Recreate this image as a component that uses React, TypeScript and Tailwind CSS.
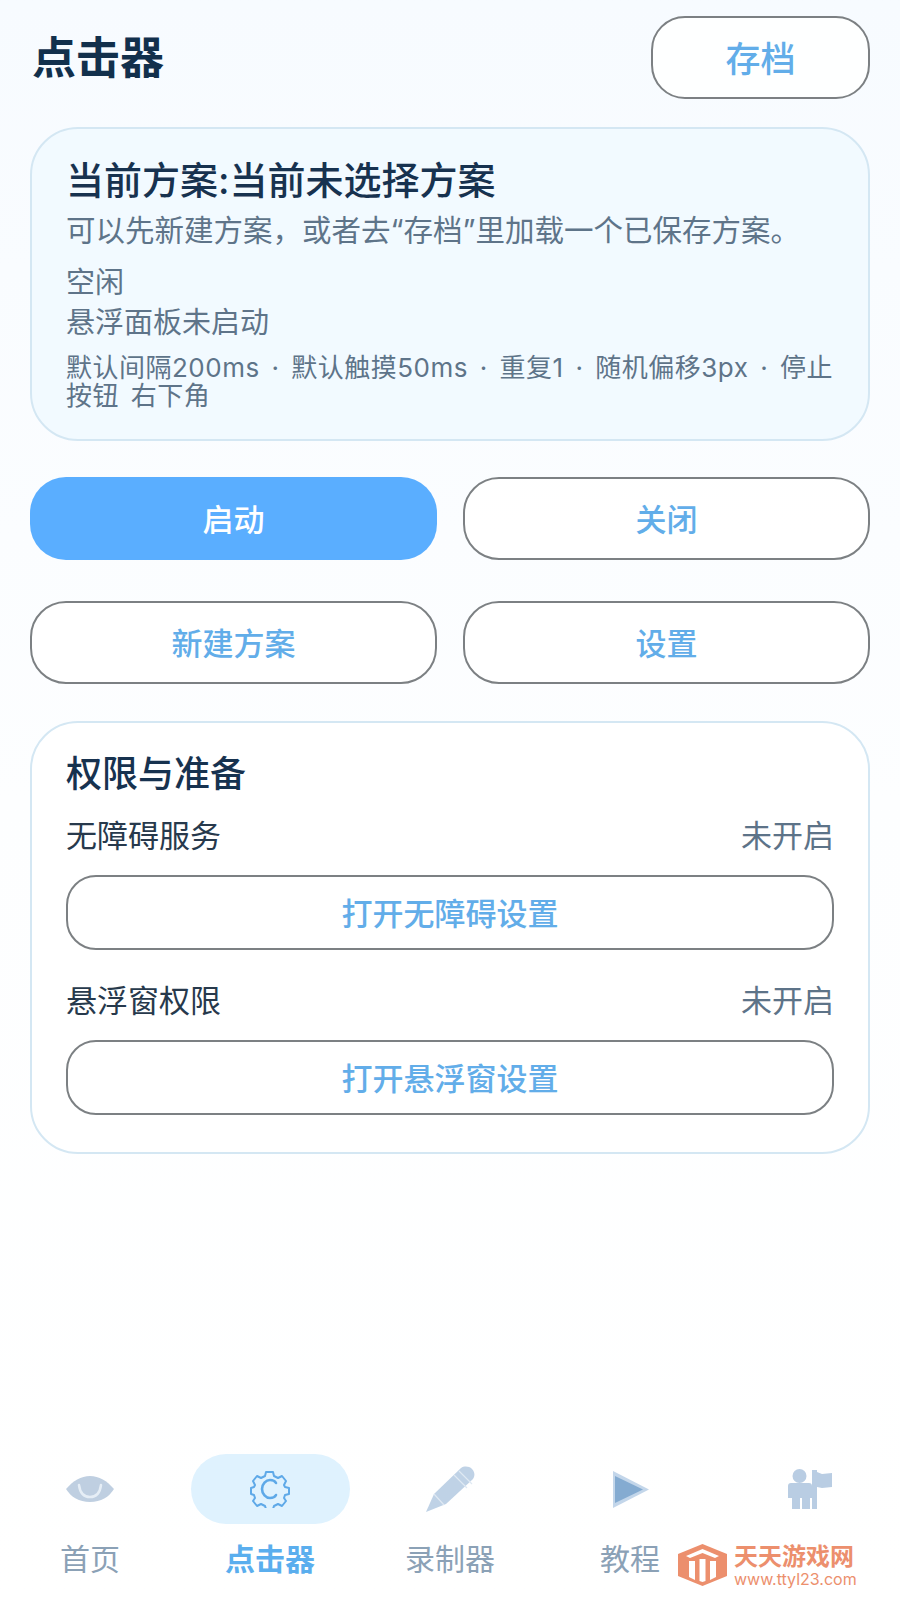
const font = "font-['Inter','Noto_Sans_CJK_SC',sans-serif]";

const OutlineButton = ({ label, className }: { label: string; className: string }) => (
    <button className={`flex items-center justify-center border-2 border-[#7c8083] bg-white/90 pt-[3px] font-medium text-[#62ade9] ${className}`}>
        {label}
    </button>
);

const PermissionRow = ({ name, action }: { name: string; action: string }) => (
    <div className="flex flex-col">
        <div className="flex items-center justify-between">
            <span className="text-[31px] leading-[40px] text-[#27394c]">{name}</span>
            <span className="text-[31px] leading-[40px] text-[#5d7388]">未开启</span>
        </div>
        <OutlineButton label={action} className="mt-[19px] h-[75px] w-full rounded-[30px] text-[31px]" />
    </div>
);

const EyeIcon = () => (
    <svg width="48" height="28" viewBox="0 0 48 28">
        <path d="M0 14C7 6 15 1 24 1s17 5 24 13c-5 8-13 13-24 13S5 22 0 14z" fill="#bfcfe1" />
        <path d="M13 10c1 8 5 12 11 12s10-4 11-12" fill="none" stroke="#e6eef6" strokeWidth="2.5" strokeLinecap="round" />
    </svg>
);

const GearIcon = () => (
    <svg width="40" height="38" viewBox="0 0 40 38" fill="none" stroke="#5ea9e8" strokeWidth="2" strokeLinejoin="round">
        <path d="M16 2h7l1 4 4 2 4-2 4 5-2 4 1 2 4 1v6l-4 1-1 3 2 3-4 5-4-2-4 2-1 3h-7l-1-3-4-2-4 2-4-5 2-3-1-3-3-1v-6l3-1 1-2-2-4 4-5 4 2 4-2z" />
        <path d="M26 13c-1-2-3-3-6-3-4 0-8 4-8 9s4 9 8 9c3 0 5-1 6-3" strokeWidth="2.6" strokeLinecap="round" />
    </svg>
);

const PencilIcon = () => (
    <svg width="50" height="46" viewBox="0 0 50 46">
        <path d="M36 2c3-2 8-2 11 1s3 7 1 10L21 38 1 46l8-18z" fill="#bfd2e6" />
        <path d="M29 9l13 13M34 5l13 13M9 28l10 11" stroke="#dfe9f3" strokeWidth="1.2" fill="none" />
    </svg>
);

const PlayIcon = () => (
    <svg width="37" height="37" viewBox="0 0 37 37">
        <path d="M1 0l36 18.500L1 37z" fill="#c3d6ea" />
        <path d="M3 5l28 13.500L3 32z" fill="#84abd1" />
    </svg>
);

const GuideIcon = () => (
    <svg width="44" height="40" viewBox="0 0 44 40" fill="#b9cde3">
        <circle cx="11.500" cy="7" r="7" />
        <path d="M3 14h18c2 0 3 1 3 3v12h-2v11h-8V29h-2v11H4V29H0V17c0-2 1-3 3-3z" />
        <path d="M24 1h5v39h-5z" />
        <path d="M29 3l5 2 10-1v14l-10 1-5-1z" />
    </svg>
);

const NavItem = ({ icon, label, active }: { icon: React.ReactNode; label: string; active?: boolean }) => (
    <div className="flex w-[180px] flex-col items-center">
        <div className={`flex h-[70px] w-[159px] items-center justify-center rounded-[35px] ${active ? "bg-[#dff2fe]" : ""}`}>
            {icon}
        </div>
        <span className={`mt-[16px] h-[38px] text-[30px] leading-[38px] ${active ? "font-bold text-[#5aaeee]" : "text-[#8ba1b6]"}`}>
            {label}
        </span>
    </div>
);

export default function App() {
    return (
        <div className={`${font} relative flex h-[1600px] w-[900px] flex-col overflow-hidden bg-gradient-to-b from-[#f7fbff] via-[#fdfeff] to-white`}>
            <div className="flex flex-col px-[30px] pt-[16px]">
                <div className="flex items-center justify-between">
                    <h1 className="pl-[2px] text-[44px] font-semibold leading-[60px] text-[#12304c]">点击器</h1>
                    <OutlineButton label="存档" className="h-[83px] w-[219px] rounded-[34px] text-[35px]" />
                </div>

                <section className="mt-[28px] flex h-[314px] flex-col rounded-[48px] border-2 border-[#d4e7f3] bg-[#f2faff] px-[34px] pt-[27px]">
                    <h2 className="text-[38px] font-medium leading-[48px] text-[#17324f]">当前方案:当前未选择方案</h2>
                    <p className="mt-[6px] text-[29.500px] leading-[40px] text-[#5e7489]">可以先新建方案，或者去“存档”里加载一个已保存方案。</p>
                    <p className="mt-[13px] text-[29px] leading-[40px] text-[#5e7489]">空闲</p>
                    <p className="mt-0 text-[29px] leading-[40px] text-[#5e7489]">悬浮面板未启动</p>
                    <p className="mt-[11px] whitespace-nowrap text-[26px] leading-[28px] tracking-[0.5px] text-[#5e7489] [word-spacing:4px]">
                        默认间隔200ms · 默认触摸50ms · 重复1 · 随机偏移3px · 停止
                        <br />
                        按钮 右下角
                    </p>
                </section>

                <div className="mt-[36px] grid grid-cols-2 gap-x-[26px] gap-y-[41px]">
                    <button className="flex h-[83px] items-center justify-center rounded-[36px] bg-[#5aaeff] pt-[3px] text-[31px] font-medium text-white">启动</button>
                    <OutlineButton label="关闭" className="h-[83px] rounded-[36px] text-[31px]" />
                    <OutlineButton label="新建方案" className="h-[83px] rounded-[36px] text-[31px]" />
                    <OutlineButton label="设置" className="h-[83px] rounded-[36px] text-[31px]" />
                </div>

                <section className="mt-[37px] flex h-[433px] flex-col rounded-[48px] border-2 border-[#d4e7f3] bg-white px-[34px] pt-[28px]">
                    <h2 className="text-[36px] font-medium leading-[46px] text-[#17324f]">权限与准备</h2>
                    <div className="mt-[19px] flex flex-col gap-[31px]">
                        <PermissionRow name="无障碍服务" action="打开无障碍设置" />
                        <PermissionRow name="悬浮窗权限" action="打开悬浮窗设置" />
                    </div>
                </section>
            </div>

            <nav className="mt-auto flex pb-[22px]">
                <NavItem icon={<EyeIcon />} label="首页" />
                <NavItem icon={<GearIcon />} label="点击器" active />
                <NavItem icon={<PencilIcon />} label="录制器" />
                <NavItem icon={<PlayIcon />} label="教程" />
                <NavItem icon={<GuideIcon />} label="" />
            </nav>

            {/* watermark */}
            <div className="absolute bottom-[12px] left-[678px] flex items-center gap-[7px]">
                <svg width="49" height="42" viewBox="0 0 49 42">
                    <path d="M24.500 0L49 10v22L24.500 42 0 32V10z" fill="#ec8f6d" />
                    <path d="M8 12l16.500-7L41 12l-4 2-12.500-5L12 14zM11 17h6v19l-6-3zM21.500 15h6v22l-3 1-3-1zM32 17h6v16l-6 3z" fill="#fff" />
                </svg>
                <div className="flex flex-col items-start">
                    <span className="mt-[2px] text-[24px] font-bold leading-[26px] text-[#ec8f6d]">天天游戏网</span>
                    <span className="text-[16px] leading-[18px] text-[#ec8f6d]">www.ttyl23.com</span>
                </div>
            </div>
        </div>
    );
}
